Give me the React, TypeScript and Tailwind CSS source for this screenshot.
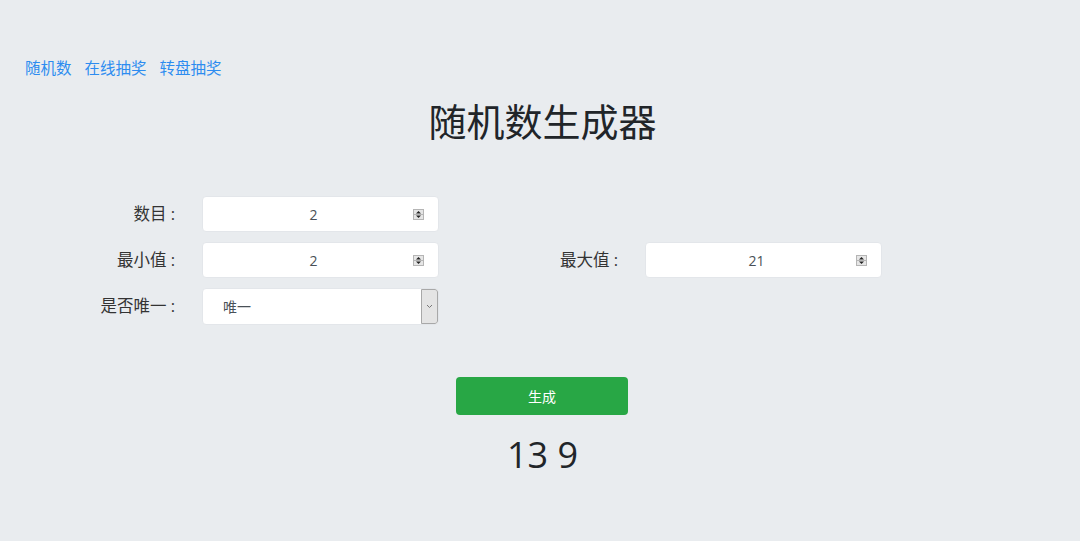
const font = { fontFamily: '"Open Sans", "Noto Sans CJK SC", sans-serif' };

function Spinner() {
  return (
    <svg width="11" height="11" viewBox="0 0 11 11" className="shrink-0">
      <rect x="0.5" y="0.5" width="10" height="10" fill="#e6e6e6" stroke="#b5b5b5" />
      <line x1="1" y1="5.5" x2="10" y2="5.5" stroke="#b5b5b5" />
      <path d="M5.5 2 L8 4.6 L3 4.6 Z" fill="#222" />
      <path d="M5.5 9 L8 6.4 L3 6.4 Z" fill="#222" />
    </svg>
  );
}

function NumberBox({ value }: { value: string }) {
  return (
    <div className="flex h-[36px] w-[237px] items-center rounded-[4px] border border-[#e3e6ea] bg-white pr-[14px]">
      <span className="flex-1 pl-[11px] text-center text-[14px] text-[#495057]">{value}</span>
      <Spinner />
    </div>
  );
}

function Field({ label, children }: { label: string; children: React.ReactNode }) {
  return (
    <div className="flex w-[443px] items-center">
      <span className="w-[175px] text-right text-[16.5px] text-[#333]">{label}</span>
      <div className="ml-[27px]">{children}</div>
    </div>
  );
}

export default function App() {
  return (
    <div className="min-h-[541px] w-full bg-[#e9ecef]" style={font}>
      <nav className="flex gap-[13px] pl-[25px] pt-[57px] text-[15.5px] leading-[22px] text-[#2d8cf0]">
        <a>随机数</a>
        <a>在线抽奖</a>
        <a>转盘抽奖</a>
      </nav>
      <h1 className="mt-[17px] pl-[5px] text-center text-[38px] leading-[50px] text-[#212529]">随机数生成器</h1>
      <div className="mt-[50px] flex flex-col gap-[10px]">
        <div className="flex">
          <Field label="数目 :">
            <NumberBox value="2" />
          </Field>
        </div>
        <div className="flex">
          <Field label="最小值 :">
            <NumberBox value="2" />
          </Field>
          <Field label="最大值 :">
            <NumberBox value="21" />
          </Field>
        </div>
        <div className="flex">
          <Field label="是否唯一 :">
            <div className="flex h-[37px] w-[237px] items-stretch overflow-hidden rounded-[4px] border border-[#e3e6ea] bg-white">
              <span className="flex flex-1 items-center pl-[20px] text-[14px] text-[#495057]">唯一</span>
              <span className="flex w-[17px] items-center justify-center rounded-r-[3px] border border-[#a8a8a8] bg-[#e4e4e4]">
                <svg width="7" height="5" viewBox="0 0 7 5">
                  <path d="M1 1 L3.5 3.5 L6 1" fill="none" stroke="#777" strokeWidth="1" />
                </svg>
              </span>
            </div>
          </Field>
        </div>
      </div>
      <div className="mt-[52px] flex justify-center pl-[4px]">
        <button className="h-[38px] w-[172px] rounded-[4px] bg-[#28a745] text-[14px] text-white">生成</button>
      </div>
      <div className="mt-[16px] pl-[5px] text-center text-[36px] leading-[48px] text-[#212529]">13 9</div>
    </div>
  );
}
